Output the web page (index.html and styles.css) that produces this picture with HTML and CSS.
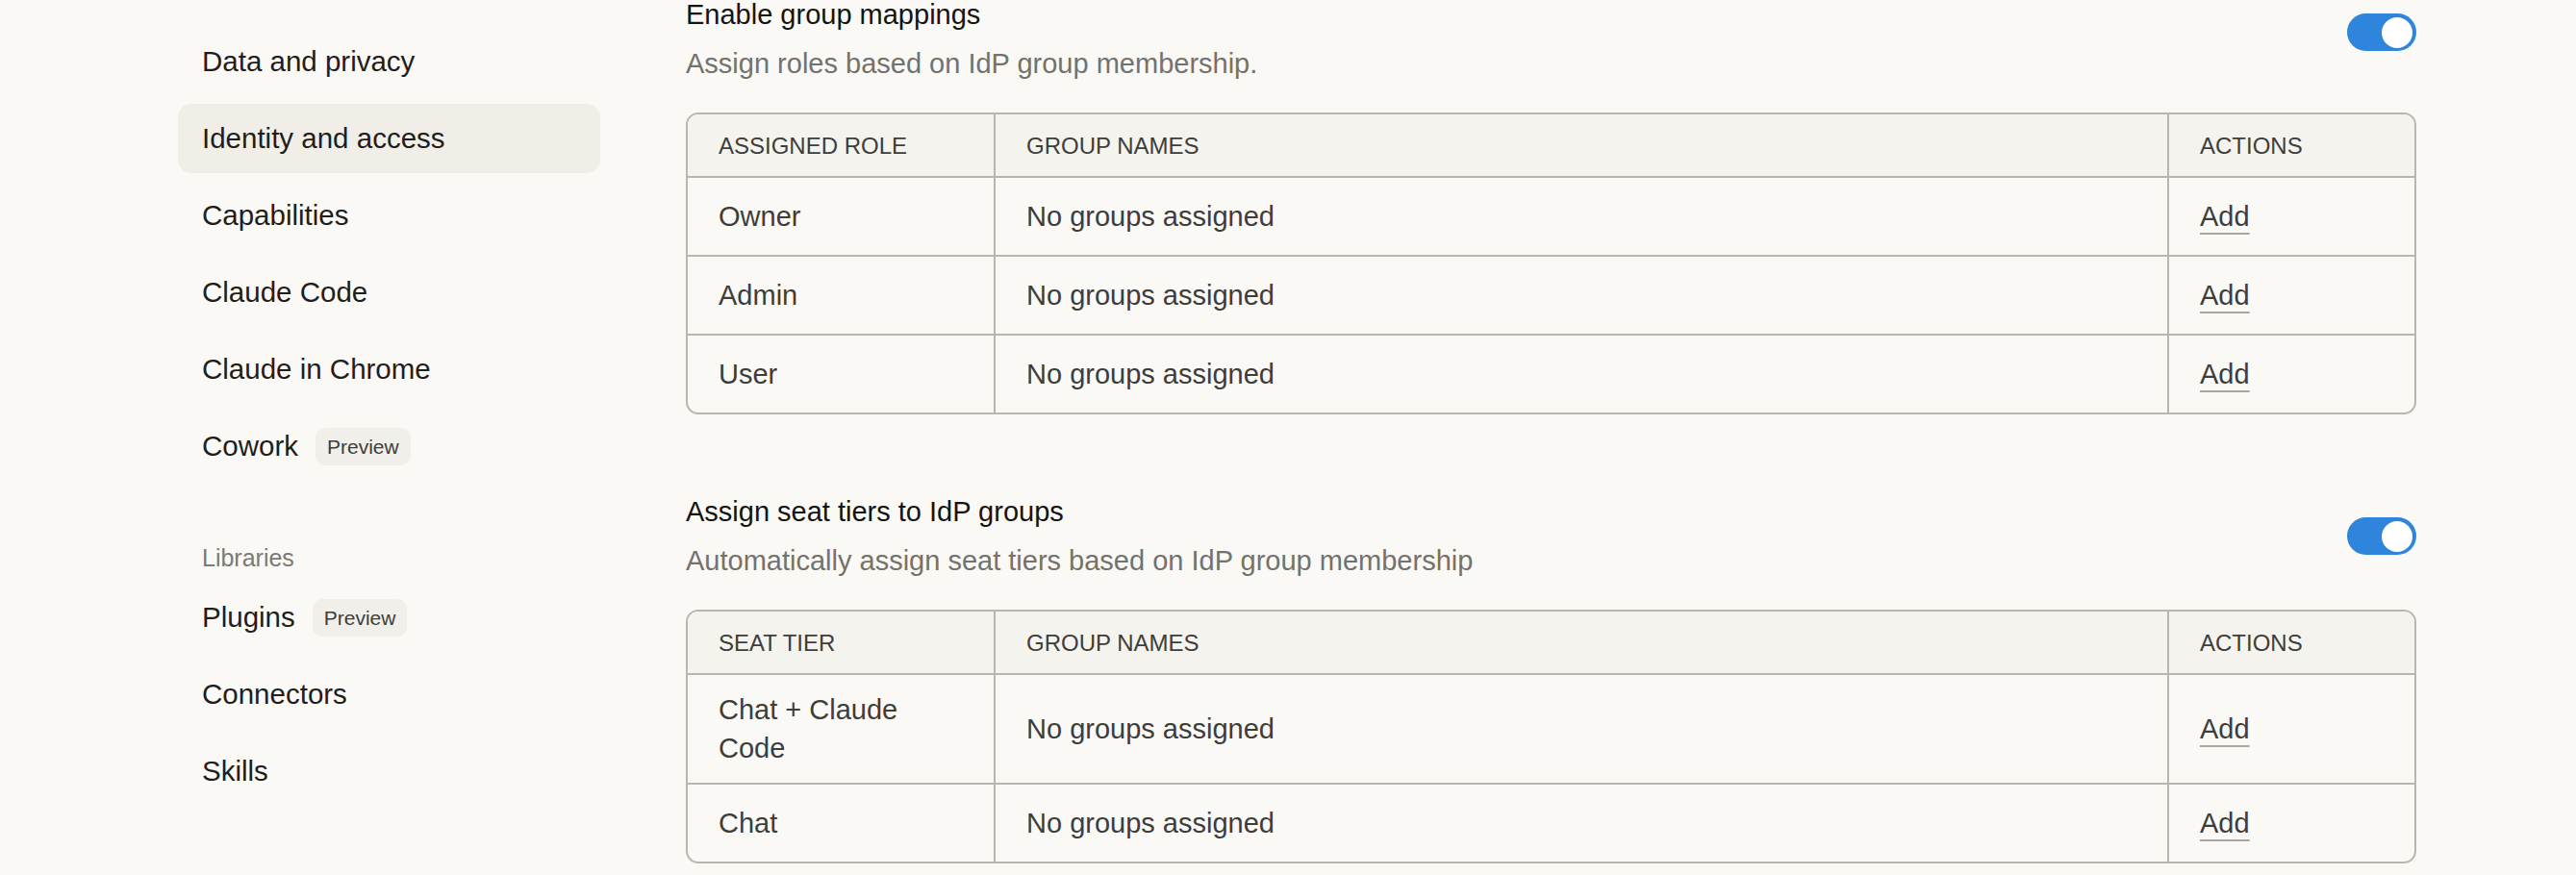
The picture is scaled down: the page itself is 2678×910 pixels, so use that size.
FILE: index.html
```html
<!DOCTYPE html>
<html lang="en">
<head>
<meta charset="utf-8">
<title>Identity and access</title>
<link rel="stylesheet" href="styles.css">
</head>
<body>
<div class="layout">
  <nav class="sidebar">
    <a class="nav-item">Usage</a>
    <a class="nav-item">Data and privacy</a>
    <a class="nav-item is-active">Identity and access</a>
    <a class="nav-item">Capabilities</a>
    <a class="nav-item">Claude Code</a>
    <a class="nav-item">Claude in Chrome</a>
    <a class="nav-item">Cowork <span class="badge">Preview</span></a>
    <div class="nav-label">Libraries</div>
    <a class="nav-item">Plugins <span class="badge">Preview</span></a>
    <a class="nav-item">Connectors</a>
    <a class="nav-item">Skills</a>
  </nav>

  <main class="content">
    <section class="setting">
      <div class="setting-head">
        <div class="setting-text">
          <div class="setting-title">Enable group mappings</div>
          <div class="setting-desc">Assign roles based on IdP group membership.</div>
        </div>
        <span class="toggle toggle--raised"><span class="knob"></span></span>
      </div>
      <div class="table">
        <div class="row row--head">
          <div class="cell">ASSIGNED ROLE</div>
          <div class="cell">GROUP NAMES</div>
          <div class="cell">ACTIONS</div>
        </div>
        <div class="row">
          <div class="cell">Owner</div>
          <div class="cell">No groups assigned</div>
          <div class="cell"><a class="link">Add</a></div>
        </div>
        <div class="row">
          <div class="cell">Admin</div>
          <div class="cell">No groups assigned</div>
          <div class="cell"><a class="link">Add</a></div>
        </div>
        <div class="row">
          <div class="cell">User</div>
          <div class="cell">No groups assigned</div>
          <div class="cell"><a class="link">Add</a></div>
        </div>
      </div>
    </section>

    <section class="setting">
      <div class="setting-head">
        <div class="setting-text">
          <div class="setting-title">Assign seat tiers to IdP groups</div>
          <div class="setting-desc">Automatically assign seat tiers based on IdP group membership</div>
        </div>
        <span class="toggle"><span class="knob"></span></span>
      </div>
      <div class="table">
        <div class="row row--head">
          <div class="cell">SEAT TIER</div>
          <div class="cell">GROUP NAMES</div>
          <div class="cell">ACTIONS</div>
        </div>
        <div class="row">
          <div class="cell">Chat + Claude Code</div>
          <div class="cell">No groups assigned</div>
          <div class="cell"><a class="link">Add</a></div>
        </div>
        <div class="row">
          <div class="cell">Chat</div>
          <div class="cell">No groups assigned</div>
          <div class="cell"><a class="link">Add</a></div>
        </div>
      </div>
    </section>
  </main>
</div>
</body>
</html>
```

FILE: styles.css
```css
* { box-sizing: border-box; }

html, body {
  margin: 0;
  padding: 0;
  background: #faf9f5;
}

body {
  font-family: "Liberation Sans", Arial, sans-serif;
  color: #1f1e1d;
  overflow: hidden;
}

.layout {
  display: flex;
  align-items: flex-start;
  margin-top: -52px;
}

/* Sidebar */
.sidebar {
  display: flex;
  flex-direction: column;
  gap: 8px;
  margin-left: 185px;
  width: 439px;
  flex: none;
}

.nav-item {
  display: flex;
  align-items: center;
  gap: 18px;
  height: 72px;
  padding: 0 24px 0 25px;
  border-radius: 14px;
  font-size: 29.5px;
  line-height: 40px;
  color: #1f1e1d;
}

.nav-item.is-active {
  background: #f0eee6;
}

.badge {
  display: inline-block;
  padding: 6px 12px;
  font-size: 21px;
  line-height: 27px;
  color: #3d3d3a;
  background: #f0efe9;
  border-radius: 10px;
}

.nav-label {
  margin-top: 54px;
  padding-left: 25px;
  font-size: 25px;
  line-height: 36px;
  color: #7b7a74;
}

/* Content */
.content {
  margin-left: 89px;
  width: 1799px;
  flex: none;
  padding-top: 47px;
}

.setting + .setting {
  margin-top: 81px;
}

.setting-head {
  display: flex;
  align-items: center;
  justify-content: space-between;
}

.setting-title {
  font-size: 29px;
  line-height: 40px;
  color: #141413;
}

.setting-desc {
  margin-top: 11px;
  font-size: 29px;
  line-height: 40px;
  color: #73726c;
}

.toggle {
  display: flex;
  justify-content: flex-end;
  align-items: center;
  width: 72px;
  height: 39px;
  padding: 0 4px;
  border-radius: 20px;
  background: #2f84dc;
  flex: none;
}

.toggle--raised {
  margin-bottom: 14px;
}

.knob {
  width: 32px;
  height: 32px;
  border-radius: 50%;
  background: #ffffff;
}

/* Table */
.table {
  margin-top: 31px;
  border: 2px solid #b8b6b0;
  border-radius: 13px;
  overflow: hidden;
}

.row {
  display: grid;
  grid-template-columns: 318px 1fr 257px;
}

.row + .row {
  border-top: 2px solid #b8b6b0;
}

.cell {
  display: flex;
  align-items: center;
  min-height: 80px;
  padding: 16px 32px;
  font-size: 29px;
  line-height: 40px;
  color: #3d3d3a;
}

.cell + .cell {
  border-left: 2px solid #b8b6b0;
}

.row--head {
  background: #f4f3ee;
}

.row--head .cell {
  min-height: 64px;
  padding: 17px 32px 15px;
  font-size: 24px;
  line-height: 32px;
  color: #3d3d3a;
}

.link {
  color: #3d3d3a;
  text-decoration: underline;
  text-decoration-color: #a8a6a0;
  text-decoration-thickness: 2px;
  text-underline-offset: 7px;
}
```
